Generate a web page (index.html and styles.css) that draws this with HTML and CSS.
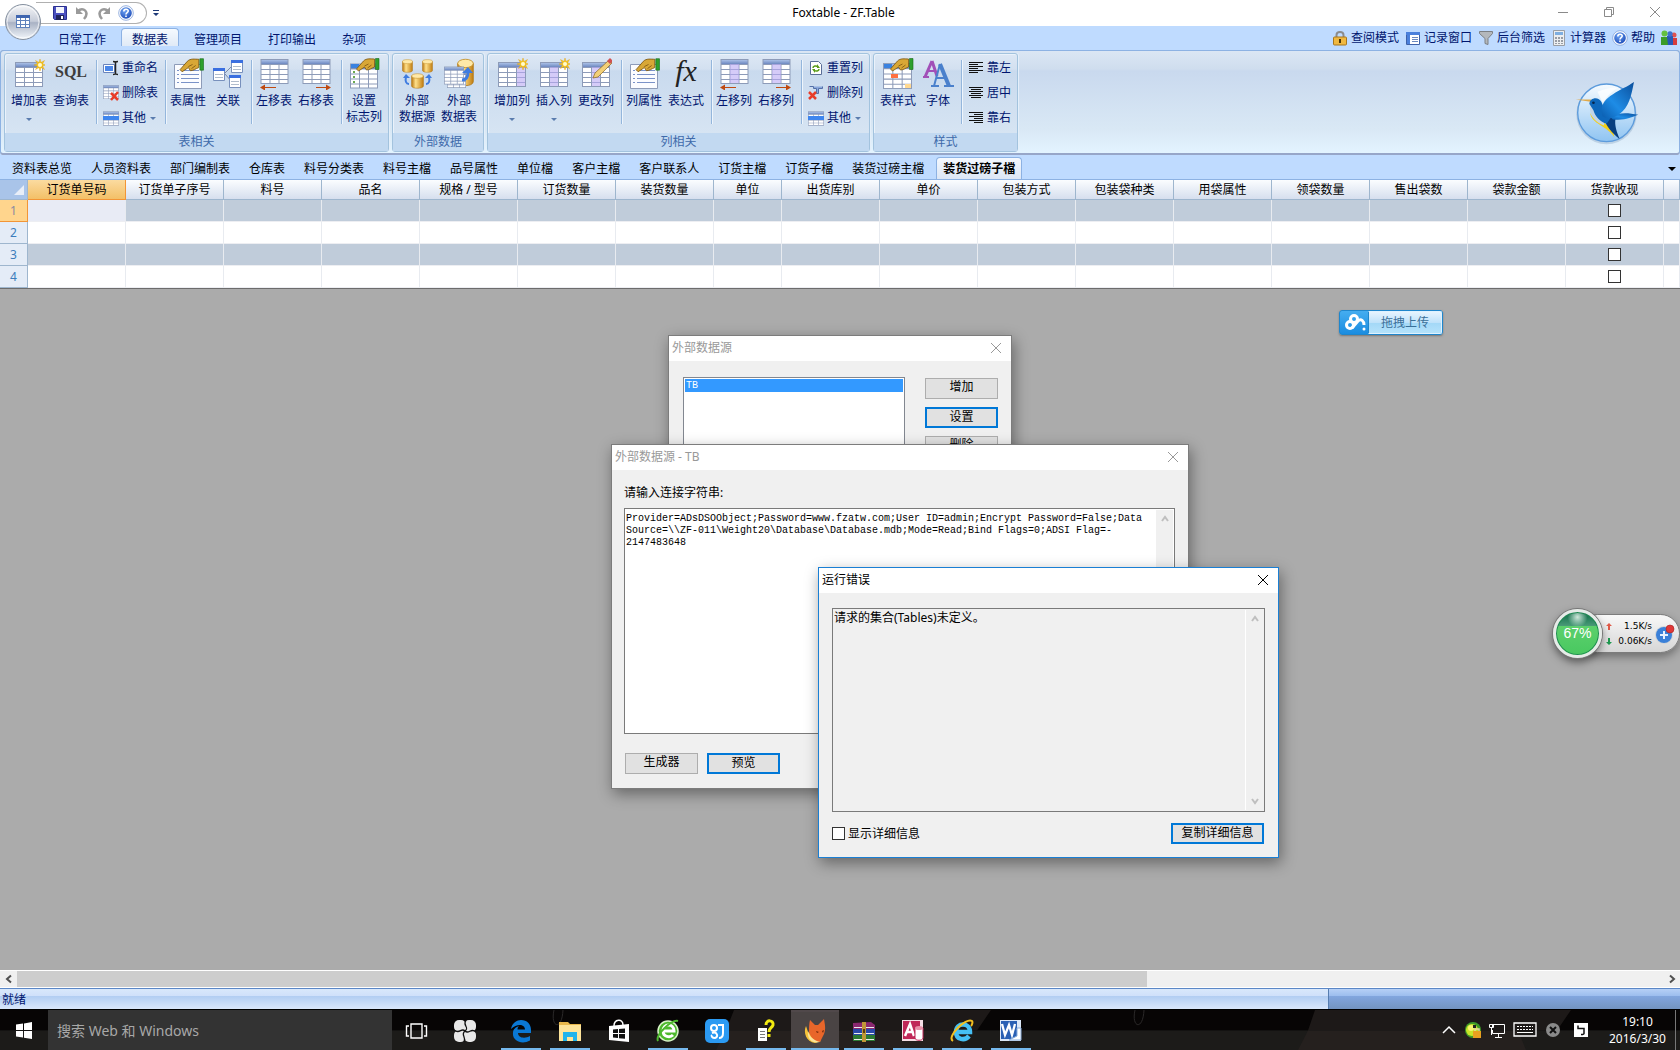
FILE: index.html
```html
<!DOCTYPE html>
<html lang="zh-CN">
<head>
<meta charset="utf-8">
<title>Foxtable - ZF.Table</title>
<link rel="stylesheet" href="styles.css">
</head>
<body>
<svg class="defs" aria-hidden="true">
  <defs>
    <linearGradient id="gold" x1="0" x2="1" y1="0" y2="0"><stop offset="0" stop-color="#b8740c"/><stop offset=".35" stop-color="#ffe08a"/><stop offset="1" stop-color="#c07c10"/></linearGradient>
    <linearGradient id="cellg" x1="0" x2="0" y1="0" y2="1"><stop offset="0" stop-color="#a9bfe6"/><stop offset="1" stop-color="#6d88c0"/></linearGradient>
    <linearGradient id="orbg" x1="0" x2="0" y1="0" y2="1"><stop offset="0" stop-color="#f7f8fa"/><stop offset=".48" stop-color="#c5cbd8"/><stop offset=".52" stop-color="#a9b2c4"/><stop offset="1" stop-color="#f4f8fc"/></linearGradient>
    <radialGradient id="helpg" cx=".4" cy=".3" r=".8"><stop offset="0" stop-color="#6fa4f4"/><stop offset="1" stop-color="#1746b4"/></radialGradient>
    <linearGradient id="wing" x1="1" x2="0" y1="0" y2="1"><stop offset="0" stop-color="#0b4f9c"/><stop offset=".6" stop-color="#1e8ce6"/><stop offset="1" stop-color="#0a5cae"/></linearGradient>
    <linearGradient id="disc" x1="0" x2="0" y1="0" y2="1"><stop offset="0" stop-color="#f6fbff"/><stop offset="1" stop-color="#8fc4f2"/></linearGradient>
  </defs>
  <symbol id="grid" viewBox="0 0 28 25"><rect width="28" height="25" fill="#8d9bb8"/><path fill="url(#cellg)" d="M1 1h26v4H1z"/><path fill="#fff" d="M1 6h8v4H1zm9 0h8v4h-8zm9 0h8v4h-8zM1 11h8v4H1zm9 0h8v4h-8zm9 0h8v4h-8zM1 16h8v4H1zm9 0h8v4h-8zm9 0h8v4h-8zM1 21h8v3H1zm9 0h8v3h-8zm9 0h8v3h-8z"/></symbol>
  <symbol id="star" viewBox="0 0 12 12"><path fill="#f8c820" stroke="#e0a010" stroke-width=".4" d="M6 0l1 3.5L10.500 1.500 8.500 5 12 6 8.500 7l2 3.500L7 8.500 6 12 5 8.500 1.500 10.500 3.500 7 0 6l3.500-1-2-3.500L5 3.500z"/><circle cx="6" cy="6" r="2" fill="#fffbd0"/></symbol>
  <symbol id="hand" viewBox="0 0 24 14"><path fill="#d8a736" stroke="#7a5410" stroke-width=".8" d="M1 11l7-8c3-3 7-2 11-2v8c-3 1-5 3-8 3l-2-3-6 4z"/><path stroke="#7a5410" stroke-width=".8" fill="none" d="M9 8l4-2m-1 4l4-3"/><path fill="#2ea02c" stroke="#176a18" stroke-width=".6" d="M20 .5h3.500v11H20z"/></symbol>
  <symbol id="add-table" viewBox="0 0 32 32"><use href="#grid" x="2" y="4" width="28" height="25"/><use href="#star" x="21" y="1" width="12" height="12"/></symbol>
  <symbol id="props" viewBox="0 0 32 32"><path fill="#fbfcff" stroke="#8d9bb8" d="M2.500 6.500h27v24h-27z"/><path stroke="#7a92c8" d="M5 12.500h2m2 0h18M5 16.500h2m2 0h18M5 20.500h2m2 0h18M5 24.500h2m2 0h18"/><use href="#hand" x="7" y="0" width="25" height="15"/></symbol>
  <symbol id="relate" viewBox="0 0 32 32"><path stroke="#7a8aa8" fill="none" d="M13 15l8-8M13 16l7 8"/><g fill="#fff" stroke="#7890bc"><path d="M19.500 2.500h11v12h-11zM1.500 10.500h11v12h-11zM17.500 17.500h11v12h-11z"/></g><path fill="#3a6fe0" d="M19 2h12v3H19zM1 10h12v3H1zM17 17h12v3H17z"/><path stroke="#b0bccc" d="M21 8.500h8m-8 3h8M3 16.500h8m-8 3h8M19 23.500h8m-8 3h8"/></symbol>
  <symbol id="move-l" viewBox="0 0 32 32"><use href="#grid" x="1" y="1" width="31" height="25"/><path stroke="#c04a10" d="M4 29.500h14"/><path fill="#c04a10" d="M2 29.500l5-3v6z"/></symbol>
  <symbol id="move-r" viewBox="0 0 32 32"><use href="#grid" x="1" y="1" width="31" height="25"/><path stroke="#c04a10" d="M16 29.500h14"/><path fill="#c04a10" d="M31 29.500l-5-3v6z"/></symbol>
  <symbol id="flag-col" viewBox="0 0 32 32"><use href="#grid" x="2" y="5" width="28" height="26"/><path fill="#3a82e0" d="M3 6h8v4H3z"/><path fill="#6aa84f" d="M5 13h2v2H5zm0 5h2v2H5zm0 5h2v2H5z"/><use href="#hand" x="7" y="0" width="25" height="14"/></symbol>
  <symbol id="cyl" viewBox="0 0 12 16" preserveAspectRatio="none"><path fill="url(#gold)" stroke="#b07818" stroke-width=".5" d="M.5 3v10c0 3 11 3 11 0V3z"/><ellipse cx="6" cy="3" rx="5.500" ry="2.300" fill="#ffe9a8" stroke="#c08a20" stroke-width=".5"/></symbol>
  <symbol id="ext-src" viewBox="0 0 32 32"><use href="#cyl" x="1" y="1" width="11" height="14"/><use href="#cyl" x="21" y="1" width="11" height="14"/><use href="#cyl" x="10" y="15" width="13" height="16"/><path fill="none" stroke="#3f7ce0" stroke-width="2" d="M8 26c-3 0-4-3-3-7M25 26c3 0 4-3 3-7"/><path fill="#3f7ce0" d="M2 20l3-4 4 4zM24 20l4-4 3 4z"/></symbol>
  <symbol id="ext-tbl" viewBox="0 0 32 32"><use href="#cyl" x="14" y="0" width="17" height="29"/><use href="#grid" x="4" y="13" width="19" height="17"/><use href="#grid" x="1" y="8" width="20" height="19"/><path fill="none" stroke="#3f7ce0" stroke-width="3" d="M19 22c5 0 6-4 6-8"/><path fill="#3f7ce0" d="M19 15l6-6 5 6z"/></symbol>
  <symbol id="lilac-r" viewBox="0 0 32 32"><use href="#grid" x="2" y="4" width="28" height="25"/><path fill="#b9a8f4" opacity=".6" d="M21 9h8v19h-8z"/><use href="#star" x="21" y="0" width="12" height="12"/></symbol>
  <symbol id="lilac-m" viewBox="0 0 32 32"><use href="#grid" x="2" y="4" width="28" height="25"/><path fill="#b9a8f4" opacity=".6" d="M12 9h8v19h-8z"/><use href="#star" x="21" y="0" width="12" height="12"/></symbol>
  <symbol id="edit-col" viewBox="0 0 32 32"><use href="#grid" x="2" y="4" width="28" height="25"/><path fill="#b9a8f4" opacity=".6" d="M12 9h8v19h-8z"/><path fill="#f2cf78" stroke="#8a6420" stroke-width=".7" d="M13 20l2-5L29 2l3 3-14 14z"/><path fill="#d05050" d="M27 3l3-3 3 3-3 3z"/></symbol>
  <symbol id="mcol-l" viewBox="0 0 32 32"><use href="#move-l" width="32" height="32"/><path fill="#b9a8f4" opacity=".6" d="M12 6h9v19h-9z"/></symbol>
  <symbol id="mcol-r" viewBox="0 0 32 32"><use href="#move-r" width="32" height="32"/><path fill="#b9a8f4" opacity=".6" d="M12 6h9v19h-9z"/></symbol>
  <symbol id="tbl-style" viewBox="0 0 32 32"><use href="#grid" x="1" y="5" width="29" height="26"/><path fill="#3a82e0" d="M2 6h8v4H2z"/><path fill="#ff7040" d="M9 16h7v4H9z"/><path fill="#ffd890" d="M23 26h6v4h-6z"/><use href="#hand" x="7" y="0" width="25" height="14"/></symbol>
  <symbol id="fonts" viewBox="0 0 32 32"><path fill="none" stroke="#a14fb8" stroke-width="3" d="M10 3L3 19M10 3l5 15"/><path stroke="#a14fb8" stroke-width="2" d="M6 13h7M1 19h6"/><path fill="none" stroke="#4a80cc" stroke-width="4" d="M18 6l9 22"/><path fill="none" stroke="#4a80cc" stroke-width="2" d="M18 6l-6 22M14 20h9M9 28h8m5 0h10"/></symbol>
  <symbol id="rename" viewBox="0 0 16 16"><path fill="#fff" stroke="#6a84bc" d="M.5 4.500h11v8H.5z"/><path fill="#4a86e8" d="M2 6h8v5H2z"/><path stroke="#222" stroke-width="1.500" fill="none" d="M12.500 2v12M10 1.500c1 0 2 0 2.500 1 .5-1 1.500-1 2.500-1M10 14.500c1 0 2 0 2.500-1 .5 1 1.500 1 2.500 1"/></symbol>
  <symbol id="del-tbl" viewBox="0 0 16 16"><use href="#grid" width="16" height="14"/><path stroke="#e83c28" stroke-width="2.500" d="M8 8l7 7M15 7l-7 8"/></symbol>
  <symbol id="other" viewBox="0 0 16 16"><use href="#grid" y="1" width="16" height="15"/><path fill="#3f86ee" d="M0 6h16v4H0z"/></symbol>
  <symbol id="reset" viewBox="0 0 16 16"><path fill="#fff" stroke="#5a6e98" d="M2.500 1.500h8l3 3v10h-11z"/><path fill="none" stroke="#5a9c18" stroke-width="1.500" d="M5 8c0-2 3-3 5-1M11 9c0 2-3 3-5 1"/><path fill="#5a9c18" d="M9 4v4h3zM7 13V9H4z"/></symbol>
  <symbol id="del-col" viewBox="0 0 16 16"><path fill="#8aa8dc" stroke="#5470a8" d="M1.500 1.500h4v2h3v5h2v-5h4v-2"/><path stroke="#e83c28" stroke-width="2.500" d="M1 7l7 7M8 7l-7 7"/></symbol>
  <symbol id="al-l" viewBox="0 0 16 16"><path stroke="#111" d="M1 2.500h14M1 4.500h9M1 6.500h14M1 8.500h9M1 10.500h14M1 12.500h9"/></symbol>
  <symbol id="al-c" viewBox="0 0 16 16"><path stroke="#111" d="M1 2.500h14M3 4.500h10M1 6.500h14M3 8.500h10M1 10.500h14M3 12.500h10"/></symbol>
  <symbol id="al-r" viewBox="0 0 16 16"><path stroke="#111" d="M1 2.500h14M6 4.500h9M1 6.500h14M6 8.500h9M1 10.500h14M6 12.500h9"/></symbol>
  <symbol id="help" viewBox="0 0 16 16"><circle cx="8" cy="8" r="7.300" fill="#fff" stroke="#7f9fd8" stroke-width=".8"/><circle cx="8" cy="8" r="5.800" fill="url(#helpg)"/><path fill="none" stroke="#fff" stroke-width="1.600" d="M5.800 6.500c0-3 4.400-3 4.400-.4 0 1.500-2.200 1.600-2.200 3.300M8 10.500v1.600"/></symbol>
  <symbol id="close" viewBox="0 0 12 12"><path stroke="currentColor" fill="none" d="M1 1l10 10M11 1L1 11"/></symbol>
  <symbol id="up" viewBox="0 0 10 8"><path stroke="currentColor" stroke-width="2" fill="none" d="M2 6l3-4 3 4"/></symbol>
  <symbol id="caret" viewBox="0 0 6 3"><path fill="#5a7cae" d="M0 0h6L3 3z"/></symbol>
</svg>

<header class="titlebar">
  <button class="orb" aria-label="Foxtable"><svg viewBox="0 0 38 38"><circle cx="19" cy="19" r="17.500" fill="url(#orbg)" stroke="#85909f"/><circle cx="19" cy="19" r="16" fill="none" stroke="#fff" opacity=".7"/><path fill="#5f82bc" d="M12 12h14v13H12z"/><path fill="#3f66b0" d="M12 12h14v3H12z"/><path fill="#fff" d="M13 15h3v2h-3zm4 0h4v2h-4zm5 0h3v2h-3zM13 18h3v3h-3zm4 0h4v3h-4zm5 0h3v3h-3zM13 22h3v2h-3zm4 0h4v2h-4zm5 0h3v2h-3z"/></svg></button>
  <div class="quick">
    <button aria-label="保存"><svg viewBox="0 0 16 16"><path fill="#4a50c0" stroke="#2a2f90" d="M1.500 1.500h13v13h-12l-1-1z"/><path fill="#f2f4fc" d="M4 2h8v6H4z"/><path fill="#20245c" d="M4 10h8v5H4z"/><path fill="#fff" d="M9 11h2v3H9z"/></svg></button>
    <button aria-label="撤销"><svg viewBox="0 0 16 16"><path fill="none" stroke="#9a9a9a" stroke-width="2.500" d="M4 6c5-5 12 1 6 8"/><path fill="#9a9a9a" d="M2 2v7h7z"/></svg></button>
    <button aria-label="重做"><svg viewBox="0 0 16 16"><path fill="none" stroke="#9a9a9a" stroke-width="2.500" d="M12 6C7 1 0 7 6 14"/><path fill="#9a9a9a" d="M14 2v7H7z"/></svg></button>
    <button aria-label="帮助"><svg><use href="#help"/></svg></button>
  </div>
  <button class="more" aria-label="自定义"><svg viewBox="0 0 6 7"><path fill="#1e3a78" d="M0 0h6v1H0zM0 3h6L3 6z"/></svg></button>
  <h1>Foxtable - ZF.Table</h1>
  <div class="winctl">
    <button aria-label="最小化"><svg viewBox="0 0 12 12"><path stroke="currentColor" d="M1 6.500h10"/></svg></button>
    <button aria-label="还原"><svg viewBox="0 0 12 12"><path fill="none" stroke="currentColor" d="M1.500 3.500h7v7h-7zM3.500 3.500v-2h7v7h-2"/></svg></button>
    <button aria-label="关闭"><svg><use href="#close"/></svg></button>
  </div>
</header>

<nav class="menu">
  <button>日常工作</button><button class="on">数据表</button><button>管理项目</button><button>打印输出</button><button>杂项</button>
  <div class="tools">
    <button><svg viewBox="0 0 16 16"><path fill="none" stroke="#8c8c8c" stroke-width="2" d="M4.500 7V5c0-4 7-4 7 0v2"/><rect x="1.500" y="7" width="13" height="8" rx="1" fill="#f0b840" stroke="#a8761c"/><path fill="#4a3408" d="M7 9h2v4H7z"/></svg>查阅模式</button>
    <button><svg viewBox="0 0 16 16"><path fill="#fff" stroke="#3f62a8" d="M1.500 2.500h13v12h-13z"/><path fill="#4a80dc" d="M1 2h14v3H1zM2 5h3v9H2z"/><path stroke="#6a88c0" d="M7 7.500h6m-6 2h6m-6 2h6"/></svg>记录窗口</button>
    <button><svg viewBox="0 0 16 16"><path fill="#b4b8bc" stroke="#7c8084" d="M1.500 1.500h13v2L10 8.500v6l-3-1v-5L1.500 3.500z"/></svg>后台筛选</button>
    <button><svg viewBox="0 0 16 16"><path fill="#eceef0" stroke="#9a9ea4" d="M2.500.5h11v15h-11z"/><path fill="#7eaee0" d="M4 2h8v3H4z"/><path fill="#989ca4" d="M4 7h2v2H4zm3 0h2v2H7zm3 0h2v2h-2zM4 10h2v2H4zm3 0h2v2H7zm3 0h2v2h-2zM4 13h2v1H4zm3 0h2v1H7zm3 0h2v1h-2z"/></svg>计算器</button>
    <button><svg><use href="#help"/></svg>帮助</button>
    <button aria-label="用户"><svg viewBox="0 0 16 16"><path fill="#d83c3c" d="M9 8h7v7H9z"/><circle cx="13" cy="5" r="2.500" fill="#e05050"/><path fill="#2858b8" d="M6 6h6v9H6z"/><circle cx="9" cy="4" r="2.700" fill="#3c70d0"/><path fill="#3c9c28" d="M0 7h6l1 8H0z"/><circle cx="3.500" cy="3.500" r="3" fill="#64c040"/></svg></button>
  </div>
</nav>

<section class="ribbon">
  <div class="group">
    <div class="body">
      <button class="big"><svg><use href="#add-table"/></svg><span>增加表</span><svg class="car"><use href="#caret"/></svg></button>
      <button class="big"><b class="sql">SQL</b><span>查询表</span></button>
      <i class="sep"></i>
      <div class="small"><button><svg><use href="#rename"/></svg>重命名</button><button><svg><use href="#del-tbl"/></svg>删除表</button><button><svg><use href="#other"/></svg>其他<svg class="car"><use href="#caret"/></svg></button></div>
      <i class="sep"></i>
      <button class="big"><svg><use href="#props"/></svg><span>表属性</span></button>
      <button class="big narrow"><svg><use href="#relate"/></svg><span>关联</span></button>
      <i class="sep"></i>
      <button class="big"><svg><use href="#move-l"/></svg><span>左移表</span></button>
      <button class="big"><svg><use href="#move-r"/></svg><span>右移表</span></button>
      <i class="sep"></i>
      <button class="big"><svg><use href="#flag-col"/></svg><span>设置<br>标志列</span></button>
    </div>
    <h2>表相关</h2>
  </div>
  <div class="group">
    <div class="body">
      <button class="big"><svg><use href="#ext-src"/></svg><span>外部<br>数据源</span></button>
      <button class="big"><svg><use href="#ext-tbl"/></svg><span>外部<br>数据表</span></button>
    </div>
    <h2>外部数据</h2>
  </div>
  <div class="group">
    <div class="body">
      <button class="big"><svg><use href="#lilac-r"/></svg><span>增加列</span><svg class="car"><use href="#caret"/></svg></button>
      <button class="big"><svg><use href="#lilac-m"/></svg><span>插入列</span><svg class="car"><use href="#caret"/></svg></button>
      <button class="big"><svg><use href="#edit-col"/></svg><span>更改列</span></button>
      <i class="sep"></i>
      <button class="big"><svg><use href="#props"/></svg><span>列属性</span></button>
      <button class="big"><em class="fx">fx</em><span>表达式</span></button>
      <i class="sep"></i>
      <button class="big"><svg><use href="#mcol-l"/></svg><span>左移列</span></button>
      <button class="big"><svg><use href="#mcol-r"/></svg><span>右移列</span></button>
      <i class="sep"></i>
      <div class="small"><button><svg><use href="#reset"/></svg>重置列</button><button><svg><use href="#del-col"/></svg>删除列</button><button><svg><use href="#other"/></svg>其他<svg class="car"><use href="#caret"/></svg></button></div>
    </div>
    <h2>列相关</h2>
  </div>
  <div class="group">
    <div class="body">
      <button class="big"><svg><use href="#tbl-style"/></svg><span>表样式</span></button>
      <button class="big narrow"><svg><use href="#fonts"/></svg><span>字体</span></button>
      <i class="sep"></i>
      <div class="small"><button><svg><use href="#al-l"/></svg>靠左</button><button><svg><use href="#al-c"/></svg>居中</button><button><svg><use href="#al-r"/></svg>靠右</button></div>
    </div>
    <h2>样式</h2>
  </div>
  <svg class="bird" viewBox="760 240 200 200"><circle cx="857" cy="342" r="90" fill="#5b7ea8" opacity=".25"/><circle cx="857" cy="338" r="86" fill="url(#disc)" stroke="#5c9bdc" stroke-width="4"/><path d="M830 275q40-14 60-12-30 20-44 46z" fill="#fff" opacity=".7"/><path fill="#e0a94a" d="M765 298l46 0 3 8z"/><path fill="#f2cf18" d="M808 338c4 34 50 38 72 72 0-18-14-32-30-42-20-8-36-16-42-30z"/><path fill="#c2d4e6" d="M808 318c-4 30 18 48 42 58l-2-30-20-26z"/><path fill="#083f80" d="M846 348l38 6c-4 22 4 40 12 62-22-18-42-40-50-68z"/><path fill="url(#wing)" d="M868 350c30-14 50-12 84-6-22 8-40 18-76 14z"/><path fill="#0e68bc" d="M806 312c0-20 28-24 36-6 4 10 12 30 30 44l-14 20c-20-4-36-24-40-40z"/><path fill="url(#wing)" d="M842 332c0-44 60-60 97-86-8 40-14 76-46 98-14 10-36 14-48 4z"/><circle cx="818" cy="308" r="4" fill="#06264c"/></svg>
</section>

<nav class="sheets">
  <button>资料表总览</button><button>人员资料表</button><button>部门编制表</button><button>仓库表</button><button>料号分类表</button><button>料号主檔</button><button>品号属性</button><button>单位檔</button><button>客户主檔</button><button>客户联系人</button><button>订货主檔</button><button>订货子檔</button><button>装货过磅主檔</button><button class="on">装货过磅子檔</button>
  <button class="list" aria-label="表列表"><svg viewBox="0 0 8 4"><path d="M0 0h8L4 4z"/></svg></button>
</nav>

<div class="gridwrap">
<table>
  <colgroup><col class="c-row"><col class="c"><col class="c"><col class="c"><col class="c"><col class="c"><col class="c"><col class="c"><col class="c-unit"><col class="c"><col class="c"><col class="c"><col class="c"><col class="c"><col class="c"><col class="c"><col class="c"><col class="c"><col></colgroup>
  <thead><tr><th class="corner"><svg viewBox="0 0 10 10"><path fill="#e8eef8" d="M10 0v10H0z"/></svg></th><th class="sel">订货单号码</th><th>订货单子序号</th><th>料号</th><th>品名</th><th>规格 / 型号</th><th>订货数量</th><th>装货数量</th><th>单位</th><th>出货库别</th><th>单价</th><th>包装方式</th><th>包装袋种类</th><th>用袋属性</th><th>领袋数量</th><th>售出袋数</th><th>袋款金额</th><th>货款收现</th><th></th></tr></thead>
  <tbody>
    <tr><th class="sel">1</th><td class="cur"></td><td></td><td></td><td></td><td></td><td></td><td></td><td></td><td></td><td></td><td></td><td></td><td></td><td></td><td></td><td></td><td><input type="checkbox" aria-label="货款收现 1"></td><td></td></tr>
    <tr><th>2</th><td></td><td></td><td></td><td></td><td></td><td></td><td></td><td></td><td></td><td></td><td></td><td></td><td></td><td></td><td></td><td></td><td><input type="checkbox" aria-label="货款收现 2"></td><td></td></tr>
    <tr><th>3</th><td></td><td></td><td></td><td></td><td></td><td></td><td></td><td></td><td></td><td></td><td></td><td></td><td></td><td></td><td></td><td></td><td><input type="checkbox" aria-label="货款收现 3"></td><td></td></tr>
    <tr><th>4</th><td></td><td></td><td></td><td></td><td></td><td></td><td></td><td></td><td></td><td></td><td></td><td></td><td></td><td></td><td></td><td></td><td><input type="checkbox" aria-label="货款收现 4"></td><td></td></tr>
  </tbody>
</table>
</div>

<main class="desk">
  <button class="upload"><svg viewBox="0 0 28 23"><g fill="none" stroke="#fff" stroke-width="3"><circle cx="10" cy="14" r="3.500"/><circle cx="14" cy="8" r="3.500"/><path d="M12 17l6-7c3-3 6 0 6 4"/></g><circle cx="24" cy="18" r="1.500" fill="#fff"/></svg><span>拖拽上传</span></button>

  <section class="dlg d1">
    <header><h3>外部数据源</h3><button aria-label="关闭"><svg><use href="#close"/></svg></button></header>
    <div class="d1-body">
      <ul role="listbox"><li role="option" aria-selected="true">TB</li></ul>
      <div class="col"><button class="btn">增加</button><button class="btn focus">设置</button><button class="btn">删除</button></div>
    </div>
  </section>

  <section class="dlg d2">
    <header><h3>外部数据源 - TB</h3><button aria-label="关闭"><svg><use href="#close"/></svg></button></header>
    <div class="d2-body">
      <label for="conn">请输入连接字符串:</label>
      <div class="box"><textarea id="conn" class="mono">Provider=ADsDSOObject;Password=www.fzatw.com;User ID=admin;Encrypt Password=False;Data
Source=\\ZF-011\Weight20\Database\Database.mdb;Mode=Read;Bind Flags=0;ADSI Flag=-
2147483648</textarea><div class="vbar"><svg><use href="#up"/></svg></div></div>
      <div class="actions"><button class="btn">生成器</button><button class="btn focus">预览</button></div>
    </div>
  </section>

  <section class="dlg d3">
    <header><h3>运行错误</h3><button aria-label="关闭"><svg><use href="#close"/></svg></button></header>
    <div class="d3-body">
      <div class="box"><textarea readonly aria-label="错误信息">请求的集合(Tables)未定义。</textarea><div class="vbar"><svg><use href="#up"/></svg><svg class="down"><use href="#up"/></svg></div></div>
      <div class="actions"><label><input type="checkbox">显示详细信息</label><button class="btn focus wide">复制详细信息</button></div>
    </div>
  </section>

  <aside class="meter">
    <div class="ball">67%</div>
    <div class="pill">
      <div class="rates">
        <p><svg viewBox="0 0 6 7"><path fill="#e05a48" d="M3 0l3 3H4v4H2V3H0z"/></svg>1.5K/s</p>
        <p><svg viewBox="0 0 6 7"><path fill="#1f9a50" d="M3 7l3-3H4V0H2v4H0z"/></svg>0.06K/s</p>
      </div>
      <button aria-label="加速"><svg viewBox="0 0 20 20"><circle cx="9" cy="11" r="9" fill="#d0d4d8"/><circle cx="9" cy="11" r="8" fill="#3a80d8"/><path stroke="#e8f2ff" stroke-width="2" d="M5 11h8M9 7v8"/><circle cx="15" cy="5" r="4" fill="#e03838" stroke="#a82020" stroke-width=".6"/></svg></button>
    </div>
  </aside>
</main>

<div class="hbar"><button aria-label="向左"><svg viewBox="0 0 8 10"><path fill="none" stroke="#505050" stroke-width="2" d="M6 1.500L2 5l4 3.500"/></svg></button><div class="thumb"></div><div class="rest"></div><button aria-label="向右"><svg viewBox="0 0 8 10"><path fill="none" stroke="#505050" stroke-width="2" d="M2 1.500L6 5 2 8.500"/></svg></button></div>

<footer class="status"><span>就绪</span><i></i></footer>

<div class="taskbar">
  <svg class="wall" viewBox="0 0 1680 41" preserveAspectRatio="none" aria-hidden="true"><path fill="#070505" d="M0 0h1680v21H0z"/><path fill="#1c1b19" d="M0 21h1680v20H0z"/><path fill="#1d1918" d="M734 0h257l-14 21H726zM1315 0h256l-14 21h-249z"/><path fill="#25201e" d="M726 21h230l6 20H716zM1308 21h210l8 20h-228z"/><path fill="none" stroke="#2c2a2a" d="M554 0c-4 18 8 22 9 0M1135 0c-4 18 8 22 9 0"/></svg>
  <button class="start" aria-label="开始"><svg viewBox="0 0 16 17"><path fill="#fff" d="M0 2.500l7-1V8H0zM8 1.400L16 0v8H8zM0 9h7v6.500l-7-1zM8 9h8v8l-8-1.300z"/></svg></button>
  <input class="search" type="text" placeholder="搜索 Web 和 Windows" aria-label="搜索">
  <div class="apps">
    <button aria-label="任务视图"><svg viewBox="0 0 24 24"><path fill="none" stroke="#fff" stroke-width="1.400" d="M7 5h11v14H7zM5 7H2.500v10H5M20 7h2.500v10H20"/></svg></button>
    <button aria-label="应用"><svg viewBox="0 0 24 24"><g fill="#e8e8e8"><rect x="1" y="1" width="12" height="12" rx="5"/><rect x="11" y="1" width="12" height="12" rx="5"/><rect x="1" y="11" width="12" height="12" rx="5"/><rect x="11" y="11" width="12" height="12" rx="5"/></g><path fill="none" stroke="#111" stroke-width="1.300" d="M13 1c-4 6 4 7-1 11s2 6-1 11M1 11c6 5 7-3 11 1s6-4 11 1"/></svg></button>
    <button class="run first" aria-label="Edge"><svg viewBox="0 0 24 24"><path fill="#0a78d4" d="M2 10C3 4 8 1 12 1c6 0 10 4 10 10v3H9c0 5 7 6 12 3v4.500C13 26 3 22 4 14c0-4 3-6 6-7-1 1-1.500 2-1.500 3.500H16C16 5 8 4 2 10z"/></svg></button>
    <button class="run" aria-label="文件资源管理器"><svg viewBox="0 0 24 24"><path fill="#e8b84c" d="M1 3h9l2 2h11v17H1z"/><path fill="#fde49a" d="M1 6h22v16H1z"/><path fill="#1fb4ec" d="M5 13h14v9h-4v-4H9v4H5z"/></svg></button>
    <button aria-label="应用商店"><svg viewBox="0 0 24 24"><path fill="#fff" d="M2 7l20-2v18L2 21z"/><path fill="none" stroke="#fff" stroke-width="1.500" d="M7 7c0-7 9-8 9-1"/><path fill="#111" d="M6 10.500l5-.5v4H6zm6-.6l6-.5V14h-6zM6 15h5v4l-5-.5zm6 0h6v4.700l-6-.5z"/></svg></button>
    <button class="run" aria-label="浏览器"><svg viewBox="0 0 24 24"><circle cx="12" cy="12" r="10" fill="#4db82c" stroke="#d8f4c8" stroke-width="1.500"/><path fill="none" stroke="#fff" stroke-width="3" d="M6 12h12c0-8-11-8-11 0 0 6 7 7 10 4"/><path fill="none" stroke="#4db82c" stroke-width="2" d="M2 22C-1 16 16 0 22 2"/></svg></button>
    <button aria-label="助手"><svg viewBox="0 0 24 24"><rect width="24" height="24" rx="5" fill="#2b9af2"/><g fill="none" stroke="#fff" stroke-width="2"><circle cx="9" cy="9" r="3"/><path d="M7 14c5-2 7 4 3 5-3 0-4-2-3-3M13 6h5v8c0 4-2 5-4 5"/></g></svg></button>
    <button class="run" aria-label="帮助文档"><svg viewBox="0 0 24 24"><path fill="#fff" d="M4 9h9v13H4z"/><path stroke="#777" d="M6 12.500h5m-5 3h5m-5 3h5"/><path fill="none" stroke="#f2ea10" stroke-width="3" d="M12 6c0-6 8-5 7 0-1 3-4 3-4 7m0 2v3"/></svg></button>
    <button class="run act" aria-label="Foxtable"><svg viewBox="0 0 24 24"><path fill="#f6c33a" d="M3 7c-3 6 0 16 9 17l6-2L5 13z"/><path fill="#e8662a" d="M7 1l5 5 3 0 6-6c1 6 2 10 0 15l-4 8c-4 0-9-3-11-10C6 9 6 5 7 1z"/><path fill="#fbe49a" d="M5 12c1 5 5 9 12 11-8 2-13-3-12-11z"/><path fill="#6a2408" d="M13 12l3 1-2 1zM19 12l2-1-1 3z"/></svg></button>
    <button class="run" aria-label="WinRAR"><svg viewBox="0 0 24 24"><path fill="#8a2870" d="M1 4l18-1 4 3v4H1z"/><path fill="#2a48a8" d="M1 10h22v6H1z"/><path fill="#2c7a34" d="M1 16h22v6H1z"/><path fill="#eee" d="M2 8h20v1H2zm0 6h20v1H2zm0 6h20v1H2z"/><path fill="#c09838" d="M10 3h4v20h-4z"/><path fill="#5c3c10" d="M11 10h2v4h-2z"/></svg></button>
    <button class="run" aria-label="Access"><svg viewBox="0 0 24 24"><path fill="#f6dfe6" d="M1 1h21v21H1z"/><path fill="#c02858" d="M2 2h17v18H2z"/><path fill="none" stroke="#fff" stroke-width="2.500" d="M4 17l5-12 4 12M6 13h6"/><path fill="#fff" stroke="#c02858" d="M14 9v10c0 3 8 3 8 0V9z"/><ellipse cx="18" cy="9" rx="4" ry="2" fill="#e890a8"/></svg></button>
    <button class="run" aria-label="Internet Explorer"><svg viewBox="0 0 24 24"><path fill="none" stroke="#45c0f4" stroke-width="4.500" d="M6 13h14c0-10-14-10-14 0 0 8 9 9 13 4"/><path fill="none" stroke="#f4c020" stroke-width="2" d="M3 22C-4 18 16-2 22 2c1 1 0 4-1 5"/></svg></button>
    <button class="run" aria-label="Word"><svg viewBox="0 0 24 24"><path fill="#dce8f8" d="M1 1h21v21H1z"/><path fill="#2a60b4" d="M2 2h16v18H2z"/><path fill="none" stroke="#fff" stroke-width="2.300" d="M3 5l3 11 4-10 3 10 3-11"/><path fill="#fff" stroke="#8aaedc" d="M18 9h4v12H10l8-4z"/></svg></button>
  </div>
  <div class="tray">
    <svg viewBox="0 0 16 16"><path fill="none" stroke="#fff" stroke-width="1.500" d="M2 11l6-6 6 6"/></svg>
    <svg viewBox="0 0 16 16"><circle cx="8" cy="8" r="8" fill="#3f9a28"/><circle cx="7" cy="8" r="6" fill="#c8e428"/><circle cx="6" cy="6" r="3" fill="#f8f470"/><path fill="#222" d="M8 3h3v3H8z"/><path fill="#e8a020" d="M8 9h8v7H8z"/><path fill="none" stroke="#e8d8a0" stroke-width="1.500" d="M10 9V7h4v2"/></svg>
    <svg viewBox="0 0 16 16"><path fill="none" stroke="#fff" d="M3.500 5V2.500h12v9h-12V8M9.500 12v3M6 15.500h7M.5 2.500h4v3h-4zM2.500 6v7"/></svg>
    <svg class="kb" viewBox="0 0 24 16"><path fill="none" stroke="#fff" stroke-width="1.300" d="M1 1h22v13H1z"/><path stroke="#fff" stroke-dasharray="2 1" d="M4 4.500h16M4 7.500h16"/><path stroke="#fff" d="M4 10.500h16"/></svg>
    <svg viewBox="0 0 16 16"><circle cx="8" cy="8" r="7" fill="#8a8a8a"/><path stroke="#111" stroke-width="2" d="M5 5l6 6M11 5l-6 6"/></svg>
    <svg class="ime" viewBox="0 0 16 16"><path fill="#fff" d="M1 1h14v14H1z"/><path fill="none" stroke="#111" stroke-width="1.500" d="M5 3.500L5 6.500h6v5c0 1-1 1-3 1"/></svg>
  </div>
  <time>19:10<br>2016/3/30</time>
</div>
</body>
</html>
```
FILE: styles.css
```css
* { box-sizing: border-box; }
body {
  margin: 0;
  height: 100vh;
  display: flex;
  flex-direction: column;
  overflow: hidden;
  font: 12px/16px "Noto Sans", "Noto Sans CJK SC", sans-serif;
  color: #000;
  background: #ababab;
}
button, input, textarea { font: inherit; color: inherit; }
button { border: 0; padding: 0; margin: 0; background: none; white-space: nowrap; }
h1, h2, h3, p, ul { margin: 0; padding: 0; font-weight: 400; font-size: 12px; list-style: none; }
svg { display: block; width: 16px; height: 16px; flex: none; }
.defs { position: absolute; width: 0; height: 0; }

/* Title bar */
.titlebar { position: relative; height: 26px; flex: none; display: flex; align-items: center; background: #fff; }
.orb { position: absolute; left: 4px; top: 3px; z-index: 2; }
.orb svg { width: 38px; height: 38px; }
.quick {
  display: flex; align-items: center; gap: 6px;
  height: 22px; margin-left: 36px; padding: 0 12px 0 16px;
  border: 1px solid #b0b0b0; border-left: 0; border-radius: 0 11px 11px 0;
}
.more { margin-left: 6px; }
.more svg { width: 6px; height: 7px; }
.titlebar h1 { flex: 1; text-align: center; padding-right: 12px; line-height: 26px; }
.winctl { display: flex; align-self: flex-start; color: #8a8a8a; margin-right: 2px; }
.winctl button { width: 46px; height: 24px; display: grid; place-items: center; }
.winctl svg { width: 12px; height: 12px; }

/* Menu row */
.menu {
  height: 24px; flex: none; display: flex; align-items: flex-end; gap: 4px;
  padding: 0 3px 0 47px; background: #bfdbff; color: #00156e;
}
.menu > button { height: 22px; padding: 0 10px; border: 1px solid transparent; border-bottom: 0; }
.menu > .on {
  border-color: #8db2e3; border-radius: 4px 4px 0 0;
  background: linear-gradient(#f5faff, #dbe6f4);
}
.tools { margin-left: auto; display: flex; gap: 6px; height: 24px; align-items: center; }
.tools button { display: flex; align-items: center; gap: 3px; }

/* Ribbon */
.ribbon {
  height: 105px; flex: none; display: flex; gap: 3px; padding: 2px 38px 1px 3px;
  border: 1px solid #8db2e3; border-bottom: 2px solid #97a6c8; border-radius: 4px;
  background: linear-gradient(#dbe6f4, #cfddee 18px, #c9d9ee 20px, #d9e8f5 78px, #e3f4ff);
  color: #00156e;
  box-shadow: 0 0 0 4px #bfdbff;
}
.group {
  display: flex; flex-direction: column; border: 1px solid #a3c3de; border-radius: 3px;
  background: linear-gradient(#dde8f5, #d3e0f0 15px, #c9daee 17px, #dae7f4);
  box-shadow: inset 1px 1px 0 #eaf2fb, 1px 0 0 #e4effa;
}
.body { flex: 1; display: flex; padding: 4px 3px 0; }
.group h2 { height: 18px; line-height: 17px; text-align: center; background: #c2d9f1; color: #3e6aaa; }
.big { width: 42px; height: 70px; display: flex; flex-direction: column; align-items: center; gap: 3px; }
.big svg { width: 32px; height: 32px; }
.narrow { width: 38px; }
.big span { line-height: 16px; }
.car, .big .car { width: 6px; height: 3px; }
.big .car { margin-top: 6px; }
.sql, .fx { height: 32px; line-height: 28px; font-family: "Liberation Serif", serif; }
.sql { font-size: 16px; color: #3c3c3c; }
.fx { font-size: 30px; font-weight: 400; font-style: italic; line-height: 26px; color: #222; }
.sep { width: 1px; height: 64px; margin: 2px 1px 0 4px; background: #94b6dc; box-shadow: 1px 0 0 #eef5fc; }
.small { display: flex; flex-direction: column; gap: 9px; padding: 2px 3px 0 5px; }
.small button { display: flex; align-items: center; gap: 3px; height: 16px; }
.small .car { margin-left: 1px; }
.bird { width: 67px; height: 67px; margin: 27px 0 0 auto; }

/* Sheet tabs */
.sheets { position: relative; height: 25px; flex: none; display: flex; align-items: flex-end; gap: 5px; padding: 0 3px 0 5px; background: #bfdbff; border-bottom: 1px solid #8db2e3; }
.sheets button { height: 22px; padding: 0 6px; border: 1px solid transparent; border-bottom: 0; }
.sheets .on { font-weight: 700; border-color: #8db2e3; border-radius: 4px 4px 0 0; background: linear-gradient(#f4f8fe, #dce6f5); }
.sheets .list { margin-left: auto; padding: 0; }
.list svg { width: 8px; height: 4px; }

/* Data grid */
.gridwrap { flex: none; overflow: hidden; border-bottom: 1px solid #6c6c6c; }
table { width: 100%; table-layout: fixed; border-collapse: separate; border-spacing: 0; }
.c-row { width: 28px; }
.c { width: 98px; }
.c-unit { width: 68px; }
th, td { padding: 0; font-weight: 400; text-align: center; overflow: hidden; white-space: nowrap; border-right: 1px solid #e8ebf0; border-bottom: 1px solid #edeef2; }
thead th { height: 20px; line-height: 18px; background: linear-gradient(#fbfdff, #d6dfee); border-color: #9eb6ce; }
thead .sel { background: linear-gradient(#fbdba0, #f3c067); border-color: #f29536; }
thead .corner { background: #a9c4e9; }
.corner svg { width: 10px; height: 10px; margin: 1px 3px 0 auto; }
tbody th { height: 22px; line-height: 18px; background: #e4ecf7; color: #3c7cbc; border-color: #9eb6ce; }
tbody .sel { background: #ffd58d; border-color: #f29536; color: #8a8aa0; }
td { background: #fff; line-height: 0; }
tbody tr:nth-child(odd) td { background: #c0ccda; }
tbody tr:nth-child(odd) .cur { background: #e8ebf5; }
input[type="checkbox"] { appearance: none; width: 13px; height: 13px; margin: 0; border: 1px solid #333; background: #fff; }

/* Workspace */
.desk { position: relative; flex: 1; min-height: 0; overflow: hidden; }
.upload {
  position: absolute; right: 237px; top: 21px; width: 104px; height: 25px;
  display: flex; border: 1px solid #1f86cc; border-radius: 3px; overflow: hidden;
  background: linear-gradient(#45adf0, #1a8ce0); color: #3a6f98; box-shadow: 0 1px 2px #777;
}
.upload svg { width: 28px; height: 23px; }
.upload span { flex: 1; line-height: 23px; border: 1px solid #dff2ff; border-left-color: #1f86cc; background: linear-gradient(#e6f4ff, #bfe2fa 50%, #a3d8f7 52%, #b4e2fb); display: flex; align-items: center; justify-content: center; }

.dlg { position: absolute; display: flex; flex-direction: column; border: 1px solid #7c7c7c; background: #f0f0f0; box-shadow: 2px 5px 14px rgba(0, 0, 0, .4); }
.dlg header { height: 25px; flex: none; display: flex; justify-content: space-between; align-items: center; padding: 0 9px 1px 3px; background: #fff; color: #999; }
.dlg header svg { width: 12px; height: 12px; }
.d1 { left: 668px; top: 46px; width: 344px; height: 180px; }
.d2 { left: 611px; top: 155px; width: 578px; height: 345px; }
.d3 { left: 818px; top: 278px; width: 461px; height: 291px; border-color: #1a7fd4; }
.d3 header { color: #000; }
.btn { width: 73px; height: 21px; border: 1px solid #adadad; background: #e1e1e1; line-height: 16px; padding-bottom: 3px; }
.focus { border: 2px solid #0078d7; }
.wide { width: 93px; }
.d1-body { flex: 1; display: flex; justify-content: space-between; padding: 16px 13px 12px 14px; }
.d1 ul { width: 222px; border: 1px solid #828790; background: #fff; padding: 1px; font: 10px/13px "Liberation Mono", monospace; }
.d1 li { height: 13px; padding-left: 1px; background: #3399ff; color: #fff; }
.col { display: flex; flex-direction: column; gap: 8px; padding-top: 1px; }
.d2-body { flex: 1; display: flex; flex-direction: column; padding: 15px 13px 14px 12px; }
.d2-body label { line-height: 16px; margin-bottom: 7px; }
.box { display: flex; border: 1px solid #7a7a7a; padding: 1px; background: #fff; }
.box textarea { flex: 1; border: 0; margin: 0; padding: 1px; resize: none; outline: 0; background: transparent; overflow: hidden; }
.box .mono { font: 10px/12px "Liberation Mono", monospace; padding: 3px 0; }
.vbar { width: 17px; background: #f0f0f0; color: #bfbfbf; display: flex; flex-direction: column; justify-content: space-between; align-items: center; padding: 5px 0; }
.vbar svg { width: 10px; height: 8px; }
.down { transform: rotate(180deg); }
.d2-body .box { height: 226px; }
.actions { display: flex; gap: 9px; padding-left: 1px; margin-top: 19px; }
.d3-body { flex: 1; display: flex; flex-direction: column; padding: 15px 13px; }
.d3-body .box { height: 204px; background: #f0f0f0; }
.d3-body .box textarea { padding: 0; border-right: 1px solid #fff; }
.d3-body .actions { margin-top: 11px; padding: 0 1px 0 0; justify-content: space-between; }
.d3-body label { display: flex; align-items: center; gap: 3px; }

.meter { position: absolute; right: 0; top: 319px; width: 127px; height: 50px; display: flex; align-items: center; }
.ball { width: 49px; height: 49px; flex: none; z-index: 1; border-radius: 50%; border: 3px solid #e6ebe8; box-shadow: 0 0 0 1px #777, inset 0 0 0 1px #1f8a52, 0 4px 8px rgba(0, 0, 0, .5); background: radial-gradient(circle at 50% 12%, #cfe8dc, transparent 10px), linear-gradient(#0b6a44, #4a9a78 14px, #5cd06c 14px, #48c860); color: #fff; font: 14px/42px "Liberation Sans", sans-serif; text-align: center; }
.pill { flex: 1; height: 39px; margin-left: -24px; padding: 2px 4px 0 27px; display: flex; align-items: center; justify-content: space-between; border: 1px solid #7c7c7c; border-radius: 20px; background: linear-gradient(#f8f8f8, #d6d6d6); box-shadow: 0 4px 8px rgba(0, 0, 0, .35); }
.rates { width: 46px; }
.rates p { display: flex; align-items: center; justify-content: space-between; font: 9px/15px "DejaVu Sans", sans-serif; }
.rates svg { width: 6px; height: 7px; }
.pill button svg { width: 20px; height: 20px; }

/* Scroll bar and status */
.hbar { height: 18px; flex: none; display: flex; border: solid #fff; border-width: 1px 0; background: #f0f0f0; }
.hbar button { width: 17px; display: grid; place-items: center; }
.hbar svg { width: 8px; height: 10px; }
.thumb { flex: 1130; background: #cdcdcd; }
.rest { flex: 516; }
.status { height: 22px; flex: none; display: flex; border-top: 1px solid #5b87c6; border-bottom: 1px solid #000; color: #00156e; }
.status span { flex: 1; padding: 0 2px; line-height: 21px; border-right: 1px solid #567db0; background: linear-gradient(#d9e8fb, #cfe0fa 7px, #b1cdf2 7px, #d9e7fb); }
.status i { width: 351px; background: linear-gradient(#b6d0f6, #9cbdee 7px, #82a6df 7px, #7394c0); }

/* Taskbar */
.taskbar { position: relative; height: 40px; flex: none; display: flex; background: #111; color: #fff; }
.wall { position: absolute; inset: 0; width: 100%; height: 100%; }
.taskbar > :not(.wall) { position: relative; }
.taskbar > .wall { position: absolute; }
.start { width: 48px; display: grid; place-items: center; }
.start svg { width: 16px; height: 17px; }
.search { width: 344px; border: 0; margin: 0; padding: 1px 9px 0 9px; background: #333; font-size: 14px; outline: 0; border-radius: 0; }
.search::placeholder { color: #a8a8a8; opacity: 1; }
.apps { display: flex; gap: 1px; }
.apps button { width: 48px; display: grid; place-items: center; border-top: 2px solid transparent; }
.apps svg { width: 24px; height: 24px; }
.apps .first { margin-left: 7px; }
.run { background: linear-gradient(#76b9ed, #76b9ed) center bottom / 40px 2px no-repeat; }
.apps .act { border-color: #50484a; background: linear-gradient(#76b9ed, #76b9ed) center bottom / 48px 2px no-repeat, #4a4444; }
.tray { margin-left: auto; display: flex; align-items: center; gap: 8px; }
.kb { width: 24px; }
.ime { margin-left: 4px; }
time { width: 76px; margin-left: 11px; margin-right: 4px; text-align: center; line-height: 17px; padding: 3px 0 0 0; border-right: 1px solid #777; }
```
